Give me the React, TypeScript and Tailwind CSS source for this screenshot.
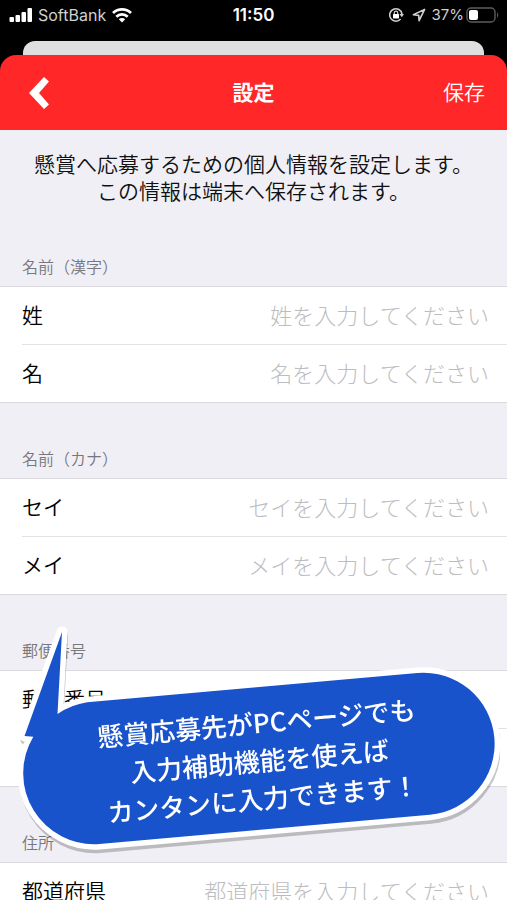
import { useState } from "react";

type Field = { id: string; label: string; placeholder?: string; hideLabel?: boolean };

const sections: { title: string; fields: Field[] }[] = [
  { title: "名前（漢字）", fields: [
    { id: "sei", label: "姓", placeholder: "姓を入力してください" },
    { id: "mei", label: "名", placeholder: "名を入力してください" },
  ]},
  { title: "名前（カナ）", fields: [
    { id: "sei-kana", label: "セイ", placeholder: "セイを入力してください" },
    { id: "mei-kana", label: "メイ", placeholder: "メイを入力してください" },
  ]},
  { title: "郵便番号", fields: [
    { id: "zip", label: "郵便番号" },
    { id: "zip-sub", label: "", hideLabel: true },
  ]},
  { title: "住所", fields: [
    { id: "pref", label: "都道府県", placeholder: "都道府県を入力してください" },
  ]},
];

function StatusBar() {
  return (
    <div className="grid h-[41px] shrink-0 grid-cols-[1fr_auto_1fr] items-start px-2 pt-[5px] font-['Inter',sans-serif] text-base leading-5 text-[#d0d0d0]">
      <div className="flex h-5 items-center gap-1.5">
        <svg className="h-4 w-6" viewBox="0 0 24 16" fill="#fff" aria-hidden="true">
          <rect x="1.500" y="10" width="4.500" height="5" rx="1"/>
          <rect x="7.500" y="8" width="4.500" height="7" rx="1"/>
          <rect x="13.500" y="5" width="4.500" height="10" rx="1"/>
          <rect x="19.500" y="1" width="4.500" height="14" rx="1"/>
        </svg>
        <span>SoftBank</span>
        <svg className="h-4 w-5" viewBox="0 0 20 16" fill="none" stroke="#fff" strokeWidth="2.8" aria-hidden="true">
          <path d="M1 6a13 13 0 0 1 18 0"/>
          <path d="M4.300 9.700a8.300 8.300 0 0 1 11.400 0"/>
          <path d="M10 15.600 6.800 12.300a4.600 4.600 0 0 1 6.400 0z" fill="#fff" stroke="none"/>
        </svg>
      </div>
      <span className="text-[17px] font-semibold text-white">11:50</span>
      <div className="flex h-5 items-center justify-end gap-0.5">
        <svg className="mr-1.5 size-4" viewBox="0 0 16 16" fill="none" stroke="#d0d0d0" strokeWidth="1.6" aria-hidden="true">
          <path d="M12.600 12A6.200 6.200 0 1 1 14 7"/>
          <path d="M11.400 7h4.600l-2.200 3.200z" fill="#d0d0d0" stroke="none"/>
          <rect x="5" y="7" width="6" height="4.400" rx=".6" fill="#fff" stroke="none"/>
          <path d="M6.300 7V5.800a1.700 1.700 0 0 1 3.400 0V7" strokeWidth="1.2"/>
        </svg>
        <svg className="mr-1 size-3.5" viewBox="0 0 14 14" fill="none" stroke="#d0d0d0" strokeWidth="1.6" strokeLinejoin="round" aria-hidden="true">
          <path d="M12.600 1.400 1.400 6.800l5.300.6.400 5.300z"/>
        </svg>
        <span className="text-[15px]">37%</span>
        <svg className="h-4 w-[33px]" viewBox="0 0 33 16" aria-hidden="true">
          <rect x="1" y="1" width="28" height="14" rx="4" fill="none" stroke="#5c5c5c" strokeWidth="1.4"/>
          <rect x="3" y="3" width="9" height="10" rx="2" fill="#fff"/>
          <path d="M31 5.500c1.600.6 1.600 4.400 0 5z" fill="#5c5c5c"/>
        </svg>
      </div>
    </div>
  );
}

function Row({ field, last }: { field: Field; last: boolean }) {
  const [value, setValue] = useState("");

  return (
    <div className="pl-[22px]">
      <div className={`flex items-center pr-[18px] pb-1 ${last ? "h-[57px]" : "h-[58px] border-b border-[#e2e2e5]"}`}>
        {!field.hideLabel && <label htmlFor={field.id} className="shrink-0 text-[21px] leading-7 font-[350] text-black">{field.label}</label>}
        <input id={field.id} value={value} onChange={e => setValue(e.target.value)} placeholder={field.placeholder}
          aria-label={field.hideLabel ? field.id : undefined}
          className="min-w-0 flex-1 bg-transparent text-right text-[22px] leading-7 font-light text-black outline-none placeholder:text-[#bdbdc0]"/>
      </div>
    </div>
  );
}

const bubble = "M62 632 57.500 714A71 71 0 0 1 87.200 702.300L417.300 673A71 71 0 0 1 429.700 814.700L99.500 844A71 71 0 0 1 33.300 736.700L24.500 736Z";

function Callout() {
  return (
    <div className="pointer-events-none absolute top-[625px] left-[15px] h-[235px] w-[485px]">
      <svg className="absolute inset-0 size-full" viewBox="15 625 485 235" strokeLinejoin="round" aria-hidden="true">
        <path d={bubble} transform="translate(1 4)" fill="#000" stroke="#000" strokeWidth="10" opacity=".22"/>
        <path d={bubble} fill="#1853cc" stroke="#fff" strokeWidth="11"/>
        <path d={bubble} fill="#1853cc"/>
      </svg>
      <div className="relative flex size-full items-center justify-center pt-[34px] pl-1">
        <p className="-rotate-5 text-center text-[26px] leading-[38px] font-medium whitespace-nowrap text-white">
          懸賞応募先がPCページでも<br/>入力補助機能を使えば<br/>カンタンに入力できます！
        </p>
      </div>
    </div>
  );
}

export default function App() {
  return (
    <div className="relative flex h-screen flex-col overflow-hidden bg-black font-['Noto_Sans_CJK_JP',sans-serif]">
      <StatusBar/>
      <div className="mx-[23px] h-3.5 shrink-0 rounded-t-xl bg-[#dfdfdf]"/>
      <header className="grid h-[75px] shrink-0 grid-cols-3 items-center rounded-t-2xl bg-[#ff2727] px-[22px] text-[21px] leading-7 text-white">
        <button type="button" aria-label="戻る" className="justify-self-start px-[7px]">
          <svg className="h-8 w-5" viewBox="0 0 20 32" fill="#fff" aria-hidden="true">
            <path d="M15 0 20 4.500 10 16 20 27.500 15 32 0 16z"/>
          </svg>
        </button>
        <h1 className="pb-1 text-center font-bold">設定</h1>
        <button type="button" className="justify-self-end pb-1 font-[350]">保存</button>
      </header>

      <main className="flex-1 overflow-y-auto bg-[#f0eff5] [scrollbar-width:none]">
        <p className="pt-5 pb-[7px] text-center text-[21px] leading-[27px] font-[350] text-[#111]">
          懸賞へ応募するための個人情報を設定します。<br/>この情報は端末へ保存されます。
        </p>
        {sections.map(section => (
          <section key={section.title}>
            <h2 className="flex h-[75px] items-end px-[22px] pb-2 text-base leading-6 font-[350] text-[#77777c]">{section.title}</h2>
            <div className="border-y border-[#dadade] bg-white">
              {section.fields.map((f, i) => <Row key={f.id} field={f} last={i === section.fields.length - 1}/>)}
            </div>
          </section>
        ))}
      </main>

      <Callout/>
    </div>
  );
}
